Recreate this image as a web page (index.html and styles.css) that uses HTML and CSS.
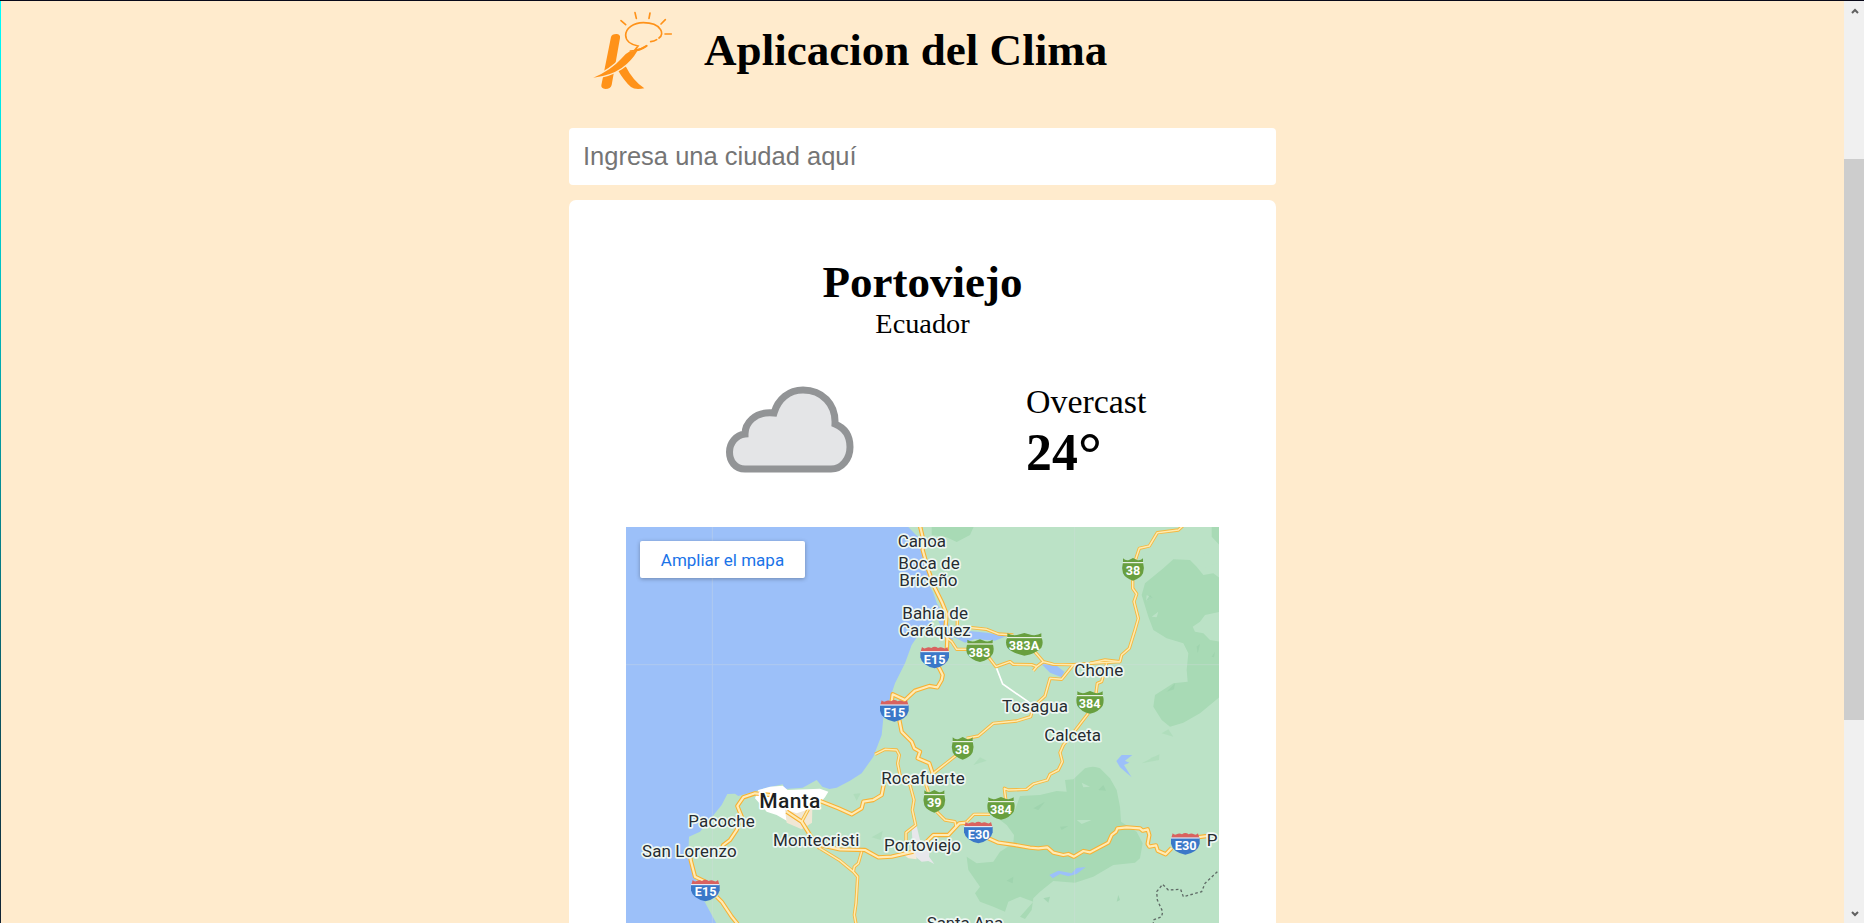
FILE: index.html
```html
<!DOCTYPE html>
<html lang="es">
<head>
<meta charset="utf-8">
<title>Aplicacion del Clima</title>
<link rel="stylesheet" href="styles.css">
</head>
<body>
<div class="window">
  <div class="edge"></div>
  <main class="page">
    <div class="app">
      <header class="header">
        <svg class="logo" viewBox="0 0 285 270" aria-hidden="true">
          <g fill="#ff9219">
            <path d="M78 96Q80 87 94 87Q107 88 105 99L80 240Q77 252 61 252Q48 251 49 241Z"/>
            <path d="M98 194L122 184Q144 228 178 250Q150 256 138 246Q116 226 98 194Z"/>
            <path class="swoosh" d="M25 218Q78 196 108 162Q120 146 135 139L157 138Q140 168 110 189Q75 213 25 218Z"/>
          </g>
          <g fill="none" stroke="#ff9219" stroke-width="5" stroke-linecap="round">
            <path d="M197 110Q207 109 215 104M222 99C232 92 232 81 226 73C217 59 196 53 175 53C145 53 122 70 122 91C122 107 137 119 159 123L149 136Q168 134 185 122"/>
            <path d="M136 138Q165 138 185 123M108 47L122 59M150 23L154 40M195 24L192 40M241 44L228 57M240 87H259"/>
          </g>
        </svg>
        <h1 class="title">Aplicacion del Clima</h1>
      </header>
      <input class="search" type="text" placeholder="Ingresa una ciudad aquí">
      <section class="card">
        <h2 class="city">Portoviejo</h2>
        <p class="country">Ecuador</p>
        <div class="weather">
          <svg class="cloud" viewBox="716 380 148 104" aria-hidden="true">
            <path d="M745 469C735 469 729.5 461 729.5 452C729.5 443 736 435 745 434C745 424 754 411 774 413C778 399 789 390 803 390C822 390 836 404 835 424C845 428 850 436 850 447C850 459 842 469 831 469Z" fill="#e4e5e7" stroke="#929496" stroke-width="7"/>
          </svg>
          <div class="reading">
            <p class="condition">Overcast</p>
            <p class="temp">24<span class="degree">°</span></p>
          </div>
        </div>
        <div class="map">
          <svg class="map-art" viewBox="18 21 1779 1188">
            <defs>
              <g id="blue"><path d="M-43-14L-38-31Q-32-24-26-28Q-18-33-10-28Q0-36 10-28Q18-33 26-28Q32-24 38-31L43-14Z" fill="#d9625f"/><path d="M-43-18H43V0Q38 25 0 33Q-38 25-43 0Z" fill="#3b78c8"/><path d="M-43-17H43" stroke="#fff" stroke-width="3"/></g>
              <g id="green2"><path d="M-30-33Q-22-25-12-28L0-34L12-28Q22-25 30-33V-21Q35-5 30 12Q23 27 0 34Q-23 27-30 12Q-35-5-30-21Z" fill="#689f3f"/><path d="M-31-20H31" stroke="#fff" stroke-width="3"/></g>
              <g id="green3"><path d="M-38-33Q-30-26-16-28L0-34L16-28Q30-26 38-33V-21Q44-5 38 10Q28 27 0 34Q-28 27-38 10Q-44-5-38-21Z" fill="#689f3f"/><path d="M-39-20H39" stroke="#fff" stroke-width="3"/></g>
              <g id="green4"><path d="M-51-33Q-40-26-22-28L0-34L22-28Q40-26 51-33V-21Q59-5 51 10Q36 27 0 34Q-36 27-51 10Q-59-5-51-21Z" fill="#689f3f"/><path d="M-52-20H52" stroke="#fff" stroke-width="3"/></g>
              <g id="minor">
                <path d="M1012 295V322L1055 323 1100 328 1135 342 1180 345M1240 390L1270 425 1300 433 1360 434 1410 430 1455 420 1500 425 1505 405 1528 385 1545 330 1555 295 1542 245 1550 222 1538 205V175M1547 118L1558 85 1588 78 1612 38 1675 30 1688 18"/>
                <path d="M982 355L995 365 1010 388 1045 388M1105 410L1128 440 1170 425 1180 433 1235 434 1250 440 1270 425M1250 440L1240 452M1410 430L1500 425"/>
                <path d="M1360 434L1325 478 1290 475 1275 528 1240 560 1232 590 1190 603 1120 610 1075 648 1040 655M1010 705L940 760"/>
                <path d="M1460 430L1445 485 1432 490 1428 520M1405 580L1365 632 1330 675 1320 698 1327 725 1315 750 1290 763 1282 780 1240 792 1220 808 1165 810 1153 805 1158 845"/>
                <path d="M765 703L795 688 830 690 838 705 833 730 840 765 870 795 882 840 877 870 887 915 858 938V970M915 785L925 815M950 875L975 900 1005 905 1008 920M1040 905L1062 883 1110 883"/>
                <path d="M545 905L565 868M600 985L660 1022 700 1055 713 1070 708 1150 703 1185 708 1212M725 995L715 1030 703 1040 700 1055"/>
              </g>
              <g id="major">
                <path d="M900 18L910 60 908 90 925 150 945 205 965 245 980 282 976 330 982 355 980 400M944 430L958 445 968 465 965 480 952 502 928 498 885 512 855 540 818 523 815 545"/>
                <path d="M838 600L845 635 875 665 883 685 900 695 893 715 928 730 938 760M1040 908L1018 910 985 945 940 945 915 970"/>
                <path d="M600 843L655 865 695 883 725 865 730 845 760 840 785 825 793 785M450 825L405 820 370 832 352 858 365 890 350 930 330 960 310 975 300 995M210 1000L212 1020 225 1070 256 1085M290 1130L305 1145 325 1175 335 1190 353 1212"/>
                <path d="M500 875L545 905 570 945 600 985M580 970L660 988 735 990 775 1012 815 1010 880 995"/>
                <path d="M1105 955L1135 968 1185 975 1230 983 1255 985 1282 982 1300 998 1330 1005 1345 1002 1362 1010 1390 993 1410 997 1465 968 1475 945 1488 935 1492 925 1520 922 1560 925 1568 932 1583 928 1588 945 1583 972 1588 980 1608 976 1613 992 1637 1003 1655 984M1730 952L1762 948"/>
              </g>
            </defs>
            <rect width="1800" height="1212" fill="#9cc0f9"/>
            <path d="M862 18L885 42 910 65 915 100 920 130 930 200 939 217 965 290 985 325 1000 360 975 350 950 290 930 310 895 345 875 375 855 430 825 490 815 520 790 595 785 645 760 710 725 760 690 782 650 803 628 807 607 800 590 780 548 803 495 807 488 793 440 803 410 812 355 828 345 821 322 822 305 855 285 880 240 935 207 950 205 1000 225 1070 240 1120 262 1160 290 1212H1800V18Z" fill="#bbe2c6"/>
            <g fill="#a8dab5">
              <path d="M935 18V45L980 52 1010 66 1050 45 1062 18Z"/>
              <path d="M1775 18V50L1800 77V18Z"/>
              <path d="M1800 175L1780 160 1750 165 1730 140 1710 120 1660 118 1630 145 1575 190 1565 225 1585 290 1600 330 1640 355 1690 370 1705 400 1700 450 1703 485 1660 490 1605 525 1600 560 1625 600 1650 620 1690 608 1740 580 1800 530V365L1770 360 1750 340 1725 335 1718 320 1740 305 1755 285 1800 275Z"/>
              <path d="M1200 828L1260 825 1310 813 1340 815 1335 780 1360 778 1395 745Q1420 735 1440 745L1470 775 1490 810 1500 860 1503 905 1550 935 1568 970 1560 1015 1545 1028 1480 1035 1420 1070 1365 1088 1300 1083 1260 1115 1240 1135 1235 1170 1215 1197 1200 1190 1240 1145 1200 1130 1165 1145 1155 1175 1120 1160 1080 1145 1065 1120 1080 1100 1045 1050 1040 1010 1070 1030 1120 1025 1140 995 1180 970 1182 945 1160 915 1140 900 1185 870Z"/>
              <path d="M755 952L788 933 782 960ZM700 822L722 820 710 842ZM1060 735L1080 712 1100 722ZM1565 730L1618 703 1617 720ZM1590 715L1615 705V720ZM1625 640L1645 628 1660 650Z" opacity=".6"/>
            </g>
            <path d="M1725 130L1750 110 1760 88 1770 112 1790 130 1750 145ZM1595 290L1615 275 1610 292ZM1385 788L1410 800 1390 802ZM1370 900L1415 900 1385 912ZM1580 225L1598 235 1578 244Z" fill="#bbe2c6"/>
            <path d="M1590 225L1598 235 1577 244ZM1730 380L1740 372 1733 400ZM1640 515L1665 490 1662 508ZM1775 410L1785 395 1782 412ZM1240 865L1275 845 1255 870ZM1320 920L1345 918 1325 930ZM1160 1082L1180 1070 1178 1090ZM1435 810L1450 795 1458 812ZM1495 1125L1500 1140 1490 1145ZM1270 1135L1290 1130 1285 1148Z" fill="#9ad1aa" opacity=".65"/>
            <g fill="#9cc0f9">
              <path d="M950 250L978 290 990 325 1040 332 1100 338 1160 348 1125 362 1065 357 1035 368 990 345 970 330Z"/>
              <path d="M1262 430L1310 437 1333 455 1325 472 1290 458Z"/>
              <path d="M1489 723L1505 705H1537L1515 722 1528 728 1512 735 1535 772 1500 742Z"/>
              <path d="M1288 1065L1315 1052 1355 1060 1370 1044 1397 1041 1370 1062 1345 1069 1320 1062 1298 1075Z"/>
            </g>
            <path d="M405 835L415 810 450 800 488 797 503 810 600 806 625 815 615 832 590 860 550 880 500 902 470 885 440 875Z" fill="#fff"/>
            <path d="M495 868L530 880 577 865 576 908 545 928 500 908Z" fill="#f0e7d5"/>
            <path d="M875 925L890 918 900 960 930 985 927 1010 943 1032 925 1023 905 1025 880 1005Z" fill="#e7e7eb"/>
            <path d="M845 1000L885 995 890 1018 865 1015Z" fill="#f5ead8"/>
            <path d="M277 21V1210M1364 21V1210M18 434H1797" stroke="#d5dcdf" stroke-width="3" opacity=".35"/>
            <path d="M1128 440L1148 492 1220 542 1240 558" fill="none" stroke="#fff" stroke-width="5"/>
            <g fill="none" stroke-linejoin="round">
              <use href="#minor" stroke="#f5b840" stroke-width="10"/>
              <use href="#major" stroke="#f8b133" stroke-width="13"/>
              <use href="#minor" stroke="#ffebb0" stroke-width="4.5"/>
              <use href="#major" stroke="#ffebb5" stroke-width="6.5"/>
            </g>
            <path d="M1792 1055L1755 1090 1745 1115 1690 1130 1682 1108 1645 1110 1628 1093 1610 1115 1612 1140 1628 1175 1625 1190 1600 1200V1212" fill="none" stroke="#5f6b66" stroke-width="4" stroke-dasharray="8 7"/>
            <use href="#blue" x="944" y="412"/><use href="#blue" x="823" y="572"/><use href="#blue" x="1075" y="937"/><use href="#blue" x="1696" y="971"/><use href="#blue" x="256" y="1111"/>
            <use href="#green3" x="1080" y="392"/><use href="#green4" x="1213" y="373"/><use href="#green2" x="1539" y="148"/><use href="#green3" x="1410" y="547"/><use href="#green2" x="1028" y="685"/><use href="#green2" x="943" y="844"/><use href="#green3" x="1143" y="865"/>
            <g class="route">
              <text x="944" y="432">E15</text><text x="823" y="591">E15</text><text x="1076" y="956">E30</text><text x="1697" y="990">E30</text><text x="257" y="1129">E15</text>
              <text x="1078" y="410">383</text><text x="1212" y="391">383A</text><text x="1539" y="166">38</text><text x="1409" y="565">384</text><text x="1027" y="703">38</text><text x="943" y="862">39</text><text x="1143" y="883">384</text>
            </g>
            <g class="place">
              <text x="833" y="82" textLength="145">Canoa</text>
              <text x="835" y="146" textLength="184">Boca de</text>
              <text x="838" y="197" textLength="174">Briceño</text>
              <text x="847" y="296" textLength="197">Bahía de</text>
              <text x="837" y="347" textLength="215">Caráquez</text>
              <text x="1146" y="576" textLength="198">Tosagua</text>
              <text x="1363" y="468" textLength="147">Chone</text>
              <text x="1273" y="663" textLength="170">Calceta</text>
              <text x="784" y="792" textLength="250">Rocafuerte</text>
              <text x="792" y="994" textLength="231">Portoviejo</text>
              <text x="459" y="978" textLength="259">Montecristi</text>
              <text x="205" y="922" textLength="199">Pacoche</text>
              <text x="66" y="1010" textLength="284">San Lorenzo</text>
              <text x="1760" y="977">P</text>
              <text x="920" y="1227" textLength="230">Santa Ana</text>
              <text class="place-major" x="418" y="865" textLength="183">Manta</text>
            </g>
          </svg>
          <a class="enlarge">Ampliar el mapa</a>
        </div>
      </section>
    </div>
  </main>
  <aside class="scrollbar" aria-hidden="true">
    <svg class="arrow" viewBox="0 0 8 6"><path d="M1 5L4 2L7 5"/></svg>
    <div class="thumb"></div>
    <svg class="arrow arrow-down" viewBox="0 0 8 6"><path d="M1 1L4 4L7 1"/></svg>
  </aside>
</div>
</body>
</html>
```
FILE: styles.css
```css
* { box-sizing: border-box; }
body { margin: 0; overflow: hidden; background: #ffebcd; color: #000; font-family: "Liberation Serif", "Times New Roman", serif; }
h1, h2, p { margin: 0; }
.window { display: flex; height: 923px; overflow: hidden; border-top: 1px solid #080818; }
.edge { width: 1px; background: linear-gradient(#00ffff, #00b4ba 35%, #123 100%); }
.page { flex: 1; display: flex; justify-content: center; }
.app { width: 707px; height: 922px; }
.header { display: flex; height: 127px; padding: 4px 0 0 16px; }
.logo { width: 95px; height: 90px; flex: none; }
.swoosh { stroke: #ffebcd; stroke-width: 8px; paint-order: stroke; }
.title { margin: 19px 0 0 24px; font-size: 45.1px; line-height: 52px; white-space: nowrap; }
.search { display: block; width: 100%; height: 57px; margin: 0 0 15px; padding: 0 14px; border: 0; border-radius: 4px; background: #fff; font: 25.5px "Liberation Sans", Arial, sans-serif; }
.search::placeholder { color: #757575; opacity: 1; }
.card { display: flow-root; height: 740px; padding: 0 57px; border-radius: 7px 7px 0 0; background: #fff; }
.city { margin-top: 56px; font-size: 45px; line-height: 52px; text-align: center; }
.country { font-size: 28.3px; line-height: 32px; text-align: center; }
.weather { display: flex; height: 104px; margin-top: 40px; padding-left: 90px; }
.cloud { width: 148px; height: 104px; flex: none; }
.reading { margin-left: 162px; }
.condition { margin-top: 3px; font-size: 33.9px; line-height: 38px; }
.temp { margin-top: 3px; font-size: 51.8px; line-height: 58px; font-weight: bold; }
.degree { display: inline-block; transform: scale(1.15); transform-origin: 0 30%; }
.map { position: relative; height: 396px; margin-top: 43px; overflow: hidden; }
.map-art { display: block; width: 593px; height: 396px; }
.place { font: 51px Roboto, sans-serif; fill: #262b30; stroke: #eef7f3; stroke-width: 10px; stroke-linejoin: round; paint-order: stroke; }
.place-major { font-size: 63px; font-weight: 500; fill: #1c1f22; stroke: #fff; }
.route { font: bold 38px Roboto, sans-serif; fill: #fff; text-anchor: middle; }
.enlarge { position: absolute; left: 14px; top: 14px; width: 165px; height: 37px; border-radius: 2px; background: #fff; box-shadow: 0 1px 4px rgba(0, 0, 0, .3); color: #1a73e8; font: 17px/39px Roboto, sans-serif; text-align: center; }
.scrollbar { display: flex; flex-direction: column; align-items: center; width: 20px; padding: 7px 0 6px; background: #f0f0f0; }
.arrow { width: 8px; height: 6px; margin-left: 1px; fill: none; stroke: #606060; stroke-width: 2; }
.arrow-down { margin-top: auto; }
.thumb { width: 20px; height: 561px; margin-top: 145px; background: #cdcdcd; }
```
